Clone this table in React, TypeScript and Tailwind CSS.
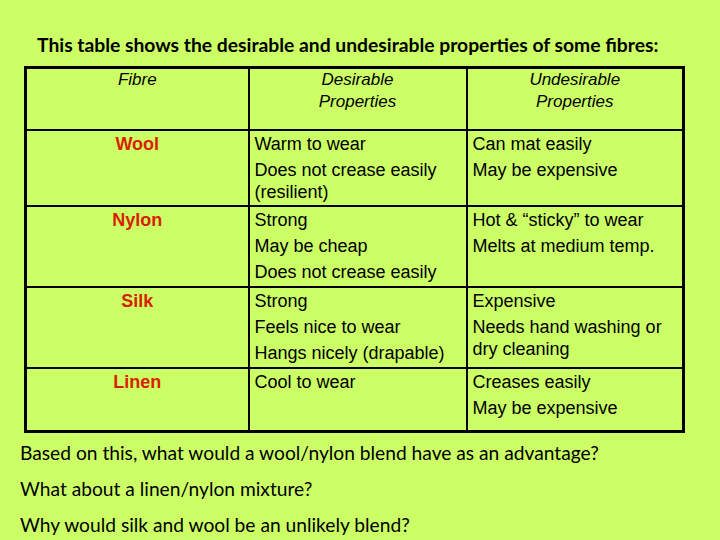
const rows = [
  {
    fibre: "Wool",
    good: ["Warm to wear", "Does not crease easily (resilient)"],
    bad: ["Can mat easily", "May be expensive"],
    h: "h-[76px]",
  },
  {
    fibre: "Nylon",
    good: ["Strong", "May be cheap", "Does not crease easily"],
    bad: ["Hot & \u201csticky\u201d to wear", "Melts at medium temp."],
    h: "h-[81px]",
  },
  {
    fibre: "Silk",
    good: ["Strong", "Feels nice to wear", "Hangs nicely (drapable)"],
    bad: ["Expensive", "Needs hand washing or dry cleaning"],
    h: "h-[81px]",
  },
  {
    fibre: "Linen",
    good: ["Cool to wear"],
    bad: ["Creases easily", "May be expensive"],
    h: "h-[64px]",
  },
];

const questions = [
  "Based on this, what would a wool/nylon blend have as an advantage?",
  "What about a linen/nylon mixture?",
  "Why would silk and wool be an unlikely blend?",
];

function Items({ list }: { list: string[] }) {
  return (
    <div className="flex flex-col gap-[4px]">
      {list.map((t) => (
        <div key={t} className="leading-[22px]">
          {t}
        </div>
      ))}
    </div>
  );
}

export default function App() {
  return (
    <div className="h-[540px] w-[720px] overflow-hidden bg-[#ccff66] text-black">
      <h1 className="pl-[37px] pt-[33px] font-['Lato',sans-serif] text-[19.3px] font-bold leading-[24px]">
        This table shows the desirable and undesirable properties of some fibres:
      </h1>

      <table className="ml-[24px] mt-[9px] w-[658px] table-fixed border-collapse border-[3px] border-black font-['Liberation_Sans',Arial,sans-serif] text-[18px]">
        <colgroup>
          <col className="w-[223px]" />
          <col className="w-[218px]" />
          <col className="w-[217px]" />
        </colgroup>
        <thead>
          <tr className="h-[62px] align-top text-[17px] italic leading-[22px]">
            <th className="border-2 border-black px-[5px] pt-0 text-center font-normal">Fibre</th>
            <th className="border-2 border-black px-[5px] pt-0 text-center font-normal">
              Desirable
              <br />
              Properties
            </th>
            <th className="border-2 border-black px-[5px] pt-0 text-center font-normal">
              Undesirable
              <br />
              Properties
            </th>
          </tr>
        </thead>
        <tbody>
          {rows.map((r) => (
            <tr key={r.fibre} className={`${r.h} align-top`}>
              <td className="border-2 border-black px-[5px] pt-[2px] text-center font-bold leading-[22px] text-[#d91e00]">
                {r.fibre}
              </td>
              <td className="border-2 border-black px-[5px] pt-[2px]">
                <Items list={r.good} />
              </td>
              <td className="border-2 border-black px-[5px] pt-[2px]">
                <Items list={r.bad} />
              </td>
            </tr>
          ))}
        </tbody>
      </table>

      <div className="mt-[7px] flex flex-col gap-[10px] pl-[20px] font-['Lato',sans-serif] text-[19.2px] leading-[26px]">
        {questions.map((q) => (
          <p key={q}>{q}</p>
        ))}
      </div>
    </div>
  );
}
